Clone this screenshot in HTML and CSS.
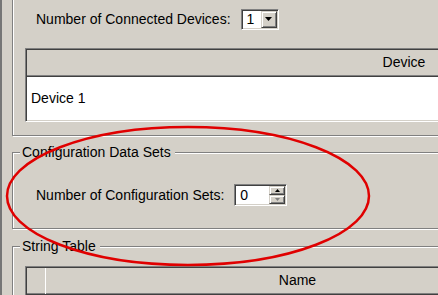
FILE: index.html
```html
<!DOCTYPE html>
<html lang="en">

<head>
  <meta charset="UTF-8">
  <title>Device Configuration</title>
  <link rel="stylesheet" href="styles.css">
</head>

<body>
  <div class="frame">
    <div class="group group-devices">
      <div class="field-row">
        <span>Number of Connected Devices:</span>
        <div class="combo">
          <span class="box-value">1</span>
          <span class="combo-btn">
            <svg width="7" height="4" viewBox="0 0 7 4"><path d="M0 0h7L3.5 4z" fill="#000" /></svg>
          </span>
        </div>
      </div>
      <div class="grid">
        <div class="grid-head">
          <div class="head-cell head-device">Device</div>
        </div>
        <div class="grid-row">Device 1</div>
      </div>
    </div>

    <fieldset class="group group-config">
      <legend>Configuration Data Sets</legend>
      <div class="field-row">
        <span>Number of Configuration Sets:</span>
        <div class="spinner">
          <span class="box-value">0</span>
          <span class="spin-btns">
            <span class="spin-btn">
              <svg width="5" height="3" viewBox="0 0 5 3"><path d="M2.5 0L5 3H0z" fill="#000" /></svg>
            </span>
            <span class="spin-btn disabled">
              <svg width="5" height="3" viewBox="0 0 5 3"><path d="M0 0h5L2.5 3z" fill="#808080" /></svg>
            </span>
          </span>
        </div>
      </div>
    </fieldset>

    <fieldset class="group group-strings">
      <legend>String Table</legend>
      <div class="grid">
        <div class="grid-head">
          <div class="head-cell head-index"></div>
          <div class="head-cell head-name">Name</div>
        </div>
      </div>
    </fieldset>
  </div>

  <!-- red annotation drawn over the form -->
  <svg class="annotation" width="438" height="295" viewBox="0 0 438 295">
    <ellipse cx="188" cy="196" rx="181" ry="69" fill="none" stroke="#e00000" stroke-width="2.5" />
  </svg>
</body>

</html>
```

FILE: styles.css
```css
* {
  box-sizing: border-box;
  margin: 0;
  padding: 0;
}

body {
  position: relative;
  width: 438px;
  height: 295px;
  overflow: hidden;
  background: #d4d0c8;
  font-family: "Liberation Sans", Arial, sans-serif;
  font-size: 14px;
  color: #000;
}

.frame {
  height: 295px;
  overflow: hidden;
  border-left: 2px solid #767676;
  padding-left: 10px;
}

.group {
  width: 470px;
  min-width: 0;
  border: 1px solid #808080;
  box-shadow: inset 1px 1px 0 #fff, 1px 1px 0 #fff;
  padding: 0 0 0 7px;
}

.group legend {
  line-height: 16px;
  padding: 0 4px 0 2px;
  margin-left: 0;
  background: #d4d0c8;
}

.group-devices {
  margin-top: -10px;
  padding-top: 17px;
  padding-bottom: 13px;
}

.group-config {
  margin-top: 8px;
  padding-top: 24px;
  padding-bottom: 22px;
}

.group-strings {
  margin-top: 9px;
  padding-top: 12px;
  padding-bottom: 20px;
}

.field-row {
  display: flex;
  align-items: center;
  gap: 10px;
  height: 22px;
  padding-left: 16px;
}

/* sunken boxes */
.combo,
.spinner,
.grid {
  border: 1px solid;
  border-color: #808080 #fff #fff #808080;
  padding: 1px;
  box-shadow: inset 1px 1px 0 #404040, inset -1px -1px 0 #d4d0c8;
}

.combo,
.spinner {
  display: flex;
  background: #fff;
}

.combo {
  width: 38px;
  height: 21px;
}

.spinner {
  width: 53px;
  height: 22px;
}

.box-value {
  flex: 1;
  padding-left: 4px;
  line-height: 17px;
}

.spinner .box-value {
  line-height: 18px;
}

/* raised buttons */
.combo-btn,
.spin-btn {
  display: flex;
  align-items: center;
  justify-content: center;
  background: #d4d0c8;
  border: 1px solid;
  border-color: #d4d0c8 #404040 #404040 #d4d0c8;
  box-shadow: inset 1px 1px 0 #fff, inset -1px -1px 0 #808080;
}

.combo-btn {
  width: 16px;
}

.spin-btns {
  display: flex;
  flex-direction: column;
  width: 16px;
}

.spin-btn {
  flex: 1;
}

.grid {
  margin-left: 5px;
  overflow: hidden;
}

.group-devices .grid {
  margin-top: 18px;
}

.grid-head {
  display: flex;
}

.head-cell {
  flex: none;
  height: 27px;
  line-height: 25px;
  text-align: center;
  border-bottom: 1px solid #404040;
  box-shadow: inset 0 -1px 0 #808080;
}

.head-device {
  width: 754px;
}

.head-index {
  width: 18px;
}

.head-name {
  width: 505px;
  box-shadow: inset 1px 0 0 #fff, inset 0 -1px 0 #808080;
}

.grid-row {
  height: 43px;
  line-height: 43px;
  padding-left: 4px;
  background: #fff;
}

.annotation {
  position: absolute;
  top: 0;
  left: 0;
  pointer-events: none;
}
```
